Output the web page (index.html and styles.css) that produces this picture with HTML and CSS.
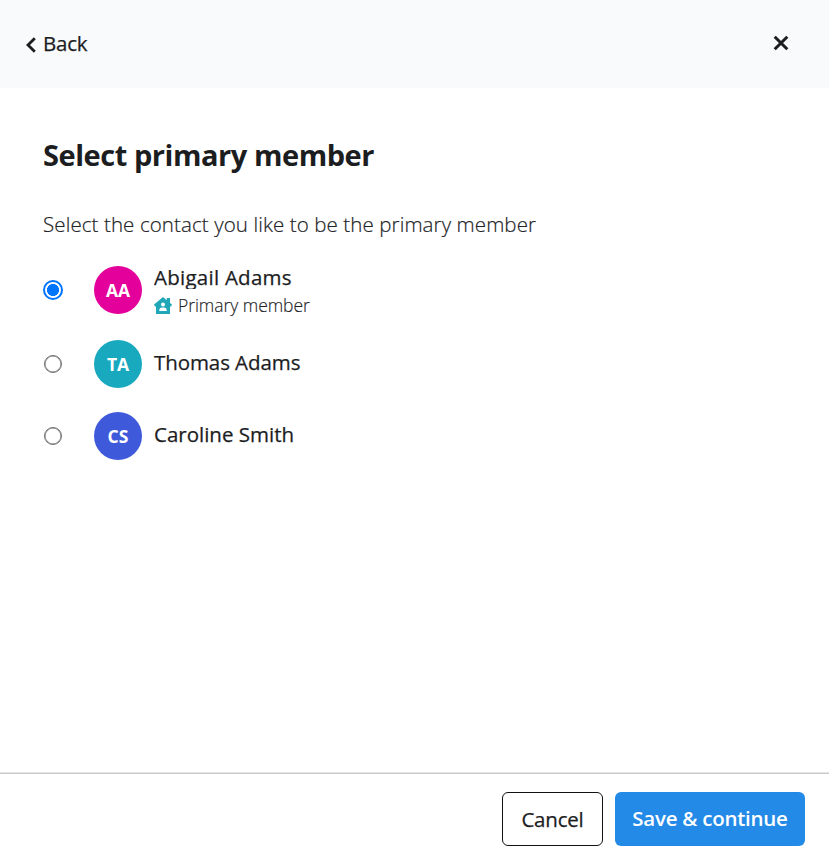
FILE: index.html
```html
<!DOCTYPE html>
<html lang="en">
<head>
<meta charset="utf-8">
<title>Select primary member</title>
<link rel="stylesheet" href="styles.css">
</head>
<body>
<header class="topbar">
  <button class="back" type="button">
    <svg class="chevron" viewBox="0 0 10 16"><path d="M8.800 1.200 2 8l6.800 6.800"/></svg>
    <span class="back-label">Back</span>
  </button>
  <button class="close" type="button" aria-label="Close">
    <svg viewBox="0 0 16 16"><path d="M1.700 1.700 14.300 14.300M14.300 1.700 1.700 14.300"/></svg>
  </button>
</header>
<main class="content">
  <h1 class="title">Select primary member</h1>
  <p class="intro">Select the contact you like to be the primary member</p>
  <div class="members">
    <label class="member">
      <input class="radio" type="radio" name="member" checked>
      <span class="avatar pink">AA</span>
      <span class="info">
        <span class="name abigail">Abigail Adams</span>
        <span class="role">
          <svg class="home" viewBox="0 0 18 17"><path class="house" d="M9 0 12.800 3.200V1H16v4.900l2 1.700L17 9.500h-1V17H2V9.500H1L0 7.600z"/><circle class="person" cx="9" cy="7.500" r="2"/><path class="person" d="M5.200 14c0-2.500 1.200-3.600 2.800-3.600h2c1.600 0 2.800 1.100 2.800 3.600z"/></svg>
          <span class="role-label">Primary member</span>
        </span>
      </span>
    </label>
    <label class="member">
      <input class="radio" type="radio" name="member">
      <span class="avatar teal">TA</span>
      <span class="name thomas">Thomas Adams</span>
    </label>
    <label class="member">
      <input class="radio" type="radio" name="member">
      <span class="avatar blue">CS</span>
      <span class="name caroline">Caroline Smith</span>
    </label>
  </div>
</main>
<footer class="footer">
  <button class="button cancel" type="button"><span>Cancel</span></button>
  <button class="button save" type="button"><span>Save &amp; continue</span></button>
</footer>
</body>
</html>
```
FILE: styles.css
```css
* { box-sizing: border-box; }
body {
  margin: 0;
  height: 857px;
  display: flex;
  flex-direction: column;
  background: #fff;
  color: #1c1d1f;
  font-family: "Segoe UI", "Open Sans", "Noto Sans", sans-serif;
  font-size: 20.500px;
}
button { font: inherit; color: inherit; padding: 0; border: 0; background: none; }
svg { display: block; }
.topbar {
  height: 88px;
  padding: 0 40px 0 26px;
  display: flex;
  justify-content: space-between;
  align-items: center;
  background: #f9fafc;
}
.back { display: flex; align-items: center; gap: 7px; }
.back-label { margin-top: -2px; letter-spacing: -0.200px; }
.back-label, .name, .cancel { -webkit-text-stroke: 0.250px #1c1d1f; }
.chevron { width: 10px; height: 16px; margin-top: 1px; fill: none; stroke: #1c1d1f; stroke-width: 2.800; }
.close { margin-bottom: 2px; }
.close svg { width: 16px; height: 16px; stroke: #1c1d1f; stroke-width: 3; }
.content { flex: 1; padding: 47px 43px 0; }
.title { margin: 0; font-size: 29px; line-height: 40px; font-weight: 700; letter-spacing: -0.450px; white-space: nowrap; }
.intro {
  margin: 35px 0 0;
  font-size: 20.500px;
  line-height: 28px;
  font-weight: 300;
  letter-spacing: 0.100px;
  color: #222326;
  -webkit-text-stroke: 0.200px #222326;
  white-space: nowrap;
}
.members { display: flex; flex-direction: column; gap: 24px; margin-top: 27px; }
.member { display: flex; align-items: center; }
.member:first-child { height: 50px; margin-bottom: 1px; }
.radio {
  appearance: none;
  width: 18px;
  height: 18px;
  margin: 0 32px 0 1px;
  border: 1px solid #707070;
  border-radius: 50%;
  background: #fff;
  box-shadow: inset 0 0 0 0.500px #707070;
}
.radio:checked {
  width: 20px;
  height: 20px;
  margin: 0 31px 0 0;
  border: 2px solid #0075ff;
  background: radial-gradient(circle, #0075ff 0 5.700px, #fff 6.300px);
  box-shadow: none;
}
.avatar {
  width: 48px;
  height: 48px;
  margin-right: 12px;
  border-radius: 50%;
  display: grid;
  place-items: center;
  color: #fff;
  font-size: 17.500px;
  font-weight: 700;
}
.pink { background: #e3009b; }
.teal { background: #19a9bf; }
.blue { background: #3e5adb; }
.name { line-height: 28px; padding-bottom: 4px; white-space: nowrap; }
.thomas { letter-spacing: -0.080px; }
.info { display: flex; flex-direction: column; padding-top: 2px; }
.abigail { height: 25px; padding: 0; line-height: 27px; letter-spacing: 0.250px; overflow: hidden; }
.role {
  display: flex;
  align-items: center;
  height: 26px;
  margin-top: 3px;
  gap: 6px;
  font-size: 17.500px;
  font-weight: 300;
  color: #222326;
  -webkit-text-stroke: 0.150px #222326;
}
.role-label { letter-spacing: -0.050px; }
.home { width: 18px; height: 17px; }
.house { fill: #22a7b8; }
.person { fill: #fff; }
.footer {
  height: 85px;
  padding: 19px 24px 0;
  display: flex;
  justify-content: flex-end;
  gap: 12px;
  border-top: 1px solid #e4e4e4;
  box-shadow: inset 0 1px #cacaca;
}
.button { height: 54px; border-radius: 6px; }
.cancel { width: 101px; border: 1px solid #111; background: #fff; letter-spacing: -0.200px; }
.save { width: 190px; padding-bottom: 2px; background: #248ae7; color: #fff; font-weight: 600; letter-spacing: -0.250px; }
```
